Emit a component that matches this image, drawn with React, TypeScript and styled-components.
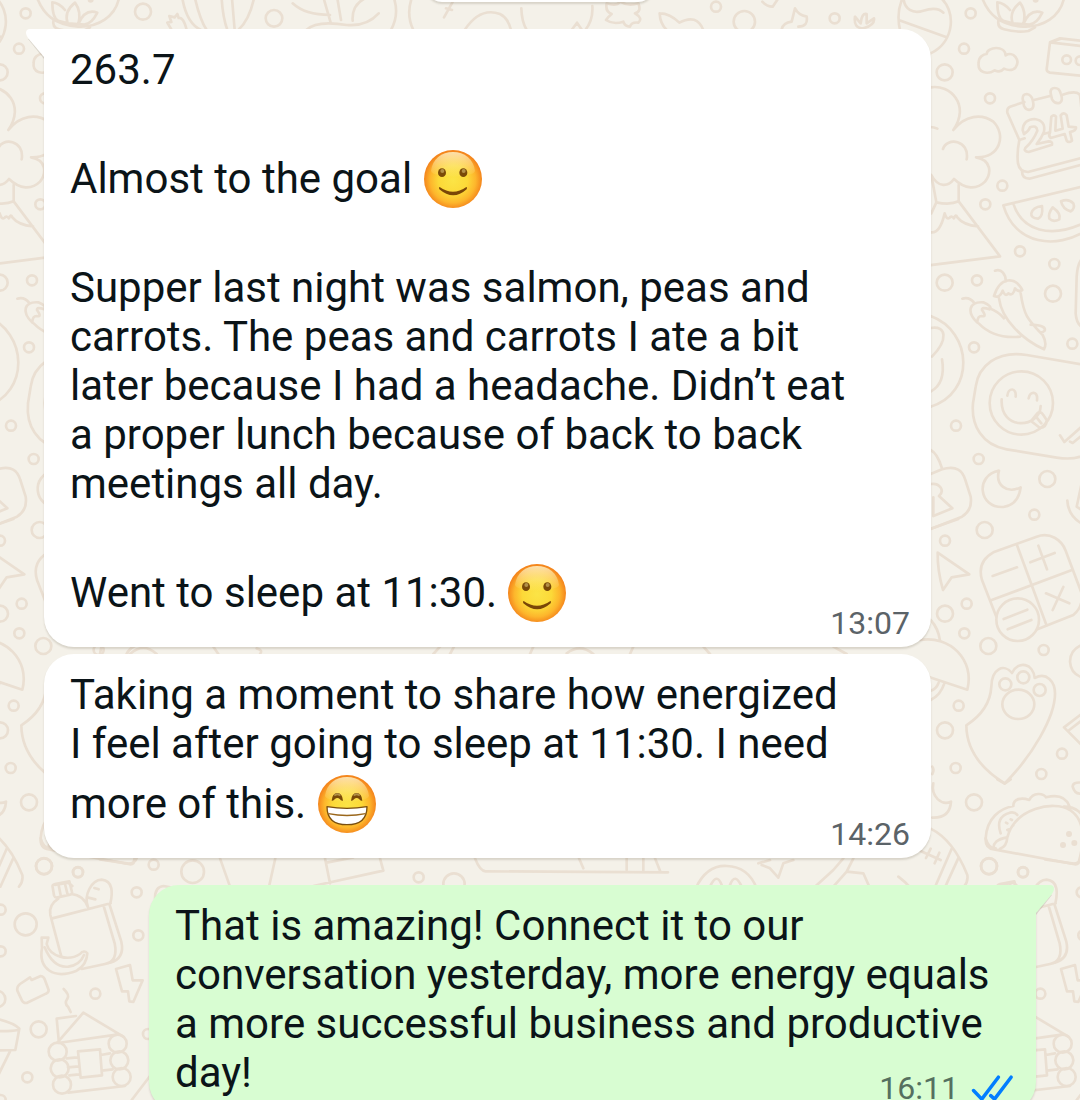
import React, { useId } from "react";
import styled, { createGlobalStyle } from "styled-components";

const GlobalStyle = createGlobalStyle`
  *, *::before, *::after { box-sizing: border-box; }
  body { margin: 0; background: #f4f1e9; }
`;

const Screen = styled.main`
  position: relative;
  height: 100vh;
  overflow: hidden;
  background: #f4f1e9;
  font-family: Roboto, "Noto Sans", sans-serif;
  color: #0b1418;
`;

const Wallpaper = styled.svg`
  position: absolute;
  inset: 0;
  width: 100%;
  height: 100%;
  fill: none;
  stroke: #eadfd2;
  stroke-width: 8;
  stroke-linecap: round;
  stroke-linejoin: round;
`;

const Thread = styled.div`
  position: relative;
  display: flex;
  flex-direction: column;
  padding: 0 44px;
`;

const DateChip = styled.div`
  align-self: center;
  width: 228px;
  height: 60px;
  margin: -58px 0 27px;
  border-radius: 16px;
  background: #fff;
  box-shadow: 0 2px 2px rgba(90, 75, 55, 0.18);
`;

type Side = "in" | "out";

const Bubble = styled.article<{ $side: Side; $tail?: boolean; $gap?: number }>`
  position: relative;
  display: grid;
  margin-top: ${(p) => p.$gap ?? 0}px;
  margin-left: ${(p) => (p.$side === "out" ? 105 : 0)}px;
  margin-right: ${(p) => (p.$side === "in" ? 105 : 0)}px;
  padding: 16px 21px 0 26px;
  background: ${(p) => (p.$side === "out" ? "#d8fdd2" : "#fff")};
  border-radius: 30px;
  ${(p) => p.$tail && (p.$side === "in" ? "border-top-left-radius: 0;" : "border-top-right-radius: 0;")}
  box-shadow: 0 2px 2px rgba(90, 75, 55, 0.18);
`;

const TailShape = styled.svg<{ $side: Side }>`
  position: absolute;
  top: 0;
  ${(p) => (p.$side === "in" ? "right: 100%;" : "left: 100%; transform: scaleX(-1);")}
  width: 18px;
  height: 30px;
  overflow: visible;
  fill: ${(p) => (p.$side === "out" ? "#d8fdd2" : "#fff")};
`;

const Body = styled.div<{ $side: Side }>`
  grid-area: 1 / 1;
  padding-bottom: ${(p) => (p.$side === "out" ? 15 : 19)}px;
  font-size: 42px;
  line-height: 49px;
`;

const Line = styled.p`
  min-height: 49px;
  margin: 0;
`;

const Meta = styled.footer<{ $side: Side }>`
  grid-area: 1 / 1;
  align-self: end;
  justify-self: end;
  display: flex;
  align-items: center;
  gap: 12px;
  padding-bottom: 8px;
  font-size: 32px;
  line-height: 32px;
  color: ${(p) => (p.$side === "out" ? "#55705f" : "#5b6368")};
`;

const Ticks = styled.svg`
  width: 42px;
  height: 28px;
  margin-right: 2px;
  fill: none;
  stroke: #027eff;
  stroke-width: 11;
  stroke-linecap: round;
`;

const Face = styled.svg`
  width: 60px;
  height: 60px;
  margin: 6px 0 5px;
  vertical-align: -21px;
`;

function Emoji({ kind }: { kind: "smile" | "grin" }) {
  const id = useId();
  const skin = `${id}skin`;
  const shine = `${id}shine`;
  return (
    <Face viewBox="0 0 180 180" role="img" aria-label={kind === "smile" ? "🙂" : "😁"}>
      <defs>
        <radialGradient id={skin} cx="0.5" cy="0.52" r="0.5">
          <stop offset="0" stopColor="#fbe446" />
          <stop offset="0.5" stopColor="#fcd938" />
          <stop offset="0.78" stopColor="#fdb62c" />
          <stop offset="1" stopColor="#f4851c" />
        </radialGradient>
        <linearGradient id={shine} x1="0" y1="0" x2="0" y2="1">
          <stop offset="0" stopColor="#fff6d0" stopOpacity="0.8" />
          <stop offset="1" stopColor="#fff3a0" stopOpacity="0.05" />
        </linearGradient>
      </defs>
      <circle cx="90" cy="90" r="87" fill={`url(#${skin})`} />
      <path d="M24 66C28 30 56 9 90 9C124 9 152 30 156 66C150 88 30 88 24 66Z" fill={`url(#${shine})`} />
      {kind === "smile" ? (
        <>
          <ellipse cx="57" cy="71" rx="12" ry="13" fill="#7a4a08" />
          <ellipse cx="121" cy="71" rx="12" ry="13" fill="#7a4a08" />
          <circle cx="58" cy="66" r="6" fill="#b29049" />
          <circle cx="122" cy="66" r="6" fill="#b29049" />
          <path d="M50 114Q90 143 130 114Q134 115 131 121Q91 157 49 121Q46 115 50 114Z" fill="#7a4607" />
        </>
      ) : (
        <>
          <path d="M44 80Q46 57 61 57Q76 57 78 80Q71 81 69 76Q61 68 53 76Q50 81 44 80Z" fill="#7a4a08" />
          <path d="M102 80Q104 57 119 57Q134 57 136 80Q129 81 127 76Q119 68 111 76Q108 81 102 80Z" fill="#7a4a08" />
          <path d="M54 63Q61 58 68 63M112 63Q119 58 126 63" fill="none" stroke="#b29049" strokeWidth="6" strokeLinecap="round" />
          <path d="M30 98Q90 108 150 98Q150 152 90 152Q30 152 30 98Z" fill="#fff" stroke="#7a4f10" strokeWidth="4" strokeLinejoin="round" />
          <path d="M34 119Q90 130 146 119" fill="none" stroke="#9a671c" strokeWidth="4" />
        </>
      )}
    </Face>
  );
}

function Tail({ side }: { side: Side }) {
  return (
    <TailShape $side={side} viewBox="0 0 18 30" aria-hidden="true">
      <path d="M2 10L18 30V27L4 9Z" fill="#5a4b37" fillOpacity="0.16" />
      <path d="M20 0H4Q0 0 0 4Q0 6 2 9L18 28H20Z" />
    </TailShape>
  );
}

/* One wallpaper repeat, drawn on a grid three times as fine as the page. */
function Doodles() {
  return (
    <g id="doodles">
      {/* ball, lotus, cloud, tape, tree, calendar, melon, volcano */}
      <g transform="translate(2700 0)">
        <path d="M15 -20C-5 15 -8 55 0 90M10 -10C12 30 40 42 70 32C95 24 115 22 130 38M2 62L140 112M92 160C165 125 170 30 118 -10" />
        <circle cx="212" cy="40" r="15" />
        <circle cx="192" cy="146" r="15" />
        <circle cx="134" cy="217" r="24" />
        <circle cx="270" cy="295" r="15" />
        <path d="M245 -10C265 45 300 75 370 80C430 82 480 50 492 -5" />
        <path d="M330 30Q312 8 292 7Q292 55 310 62L338 70Q326 35 360 8Q380 35 370 72Q390 25 427 38Q410 72 388 74L338 70M296 58Q290 82 312 88Q350 98 385 93L405 82" />
        <circle cx="407" cy="-1" r="5" />
        <path d="M260 162C262 140 315 135 317 166C340 152 362 180 347 202C337 214 320 210 312 206C304 216 290 216 284 211C262 225 232 218 236 188C236 172 250 162 260 162Z" />
        <path d="M560 124L480 115L450 127L440 208Q440 216 450 218L560 229M450 127L560 140M455 125L482 116" />
        <circle cx="500" cy="179" r="13" />
        <circle cx="540" cy="182" r="13" />
        <path d="M92 262C150 252 212 315 160 390C195 345 245 340 280 365C320 405 300 475 228 472C275 480 275 520 255 545C230 570 195 568 162 537C145 560 115 565 94 525M92 381Q102 381 112 386M129 447C140 410 210 420 200 478M94 525L109 607L94 640M176 555V604L300 769L80 797M109 607Q150 616 176 604M94 697Q120 700 134 640Q140 660 148 654Q154 645 162 655Q168 640 172 652Q190 675 234 679" />
        <path d="M373 306L330 320Q320 324 322 338L358 420Q350 460 354 490Q358 515 384 516L560 470M402 300L450 288M488 284Q530 270 540 285L550 380M358 420L374 415M366 514Q366 536 388 536L560 490M430 402L445 398" />
        <path d="M368 296Q368 282 380 282Q394 284 398 300Q404 322 394 328Q380 334 372 318ZM452 280Q450 264 464 264Q478 264 482 280Q490 302 480 308Q466 314 456 298Z" />
        <path d="M368 390Q370 358 404 357Q438 362 432 395Q424 415 410 432L446 424Q458 424 456 434L386 456Q370 454 376 444Q400 422 412 392Q410 374 390 382Q386 394 372 402ZM450 398L454 350Q462 342 468 350L466 392L488 386L482 346Q492 334 500 346L506 380L528 382Q530 392 510 396L516 422Q506 430 500 422L494 402L452 414Q444 408 450 398Z" />
        <circle cx="307" cy="557" r="15" />
        <circle cx="256" cy="613" r="15" />
        <path d="M560 557L310 616C345 735 470 750 560 690M340 611C365 690 450 720 560 665" />
        <path d="M426 618Q430 650 414 656Q392 654 394 640Q398 622 426 618ZM458 622Q484 640 478 658Q460 668 448 656Q444 640 458 622ZM483 604Q505 594 520 610Q526 626 512 634Q488 628 483 604Z" />
        <circle cx="360" cy="754" r="15" />
        <circle cx="463" cy="792" r="15" />
      </g>
      {/* chillies, sticker, phone, padlock, moon */}
      <g transform="translate(2700 720)">
        <circle cx="134" cy="128" r="24" />
        <circle cx="231" cy="121" r="15" />
        <circle cx="459" cy="161" r="24" />
        <circle cx="222" cy="322" r="15" />
        <circle cx="517" cy="311" r="15" />
        <path d="M560 42Q532 60 530 110L527 220Q530 262 560 265" />
        <path d="M285 92C305 84 318 105 317 124M282 168C300 110 345 108 367 150Q354 158 345 145Q340 170 325 160Q315 172 308 152Q300 175 282 168ZM297 175C305 240 370 300 432 328Q442 310 428 285C380 235 372 225 362 160M187 176Q208 170 222 188M232 248C198 215 208 184 250 187Q280 200 268 208Q245 200 246 210Q262 232 245 228Q232 228 232 248ZM236 250C270 285 310 295 360 290M268 205Q295 215 312 235M392 254Q440 256 434 272Q425 282 415 272" />
        <path d="M92 228C220 275 225 460 92 500M92 264C140 255 145 300 96 350M126 358Q138 430 92 455" />
        <path d="M560 376L380 345C290 330 235 380 227 440L219 490C213 555 245 615 320 628L470 653Q530 662 560 640" />
        <circle cx="364" cy="489" r="95" />
        <path d="M322 467C325 442 350 442 347 470M386 475C390 452 414 452 411 481M305 478C300 575 420 565 422 498M393 543L412 520Q420 510 430 525L440 540Q440 562 420 564ZM408 530L424 550M480 586L493 606L545 560M510 605L518 609L560 575" />
        <circle cx="168" cy="557" r="15" />
        <circle cx="236" cy="657" r="15" />
        <circle cx="442" cy="717" r="24" />
        <circle cx="403" cy="824" r="15" />
        <circle cx="254" cy="870" r="24" />
        <path d="M92 630Q112 640 126 685M92 702L126 688C170 675 188 692 196 720L212 770Q218 810 186 830L92 867M92 732C120 728 135 752 117 768L157 805L100 828V772" />
        <path d="M297 692C225 705 235 805 310 801Q355 795 362 742C320 762 285 735 297 692Z" />
        <path d="M502 782Q505 835 560 858M545 730L530 800L560 820" />
      </g>
      {/* pointer, calculator, umbrella, paw, envelope */}
      <g transform="translate(2700 1560)">
        <circle cx="135" cy="62" r="15" />
        <circle cx="200" cy="251" r="15" />
        <circle cx="135" cy="281" r="24" />
        <circle cx="193" cy="340" r="15" />
        <circle cx="265" cy="378" r="24" />
        <circle cx="431" cy="390" r="15" />
        <circle cx="176" cy="557" r="15" />
        <circle cx="135" cy="631" r="24" />
        <circle cx="167" cy="744" r="15" />
        <circle cx="486" cy="701" r="15" />
        <circle cx="424" cy="762" r="15" />
        <circle cx="222" cy="847" r="24" />
        <path d="M92 26L175 -3M113 98L208 163L155 172L129 210Q112 150 113 98Z" />
        <path d="M289 290L246 180Q230 125 280 97L410 50C450 35 485 60 497 92L545 220Q550 260 520 285L412 328M350 73L440 317M273 241L516 150M278 168L351 142M391 127L464 99M415 77L441 148M438 220L508 250M490 201L458 270" />
        <circle cx="353" cy="299" r="64" />
        <path d="M311 297L382 269M323 328L394 300" />
        <path d="M60 360C150 345 225 420 202 509L60 462M92 300Q115 325 120 362M92 540Q122 525 133 490M92 512Q108 508 116 488" />
        <path d="M199 616Q270 570 274 500C275 445 312 430 336 459C355 420 400 430 404 474C440 455 465 485 465 520C466 590 395 710 314 790Q200 720 199 616Z" />
        <circle cx="316" cy="493" r="18" />
        <circle cx="370" cy="472" r="18" />
        <circle cx="419" cy="510" r="18" />
        <ellipse cx="355" cy="553" rx="48" ry="44" />
        <path d="M545 375Q510 390 510 425Q512 460 545 472M560 570L492 622L560 690M508 630L560 590M545 788Q518 785 518 800Q525 825 545 820" />
        <path d="M97 740Q104 750 97 762M100 790C92 830 125 858 153 845Q150 895 97 893" />
      </g>
      {/* taco, football */}
      <g transform="translate(2700 2340)">
        <circle cx="267" cy="259" r="24" />
        <circle cx="369" cy="276" r="15" />
        <path d="M282 208Q255 205 257 175C260 115 300 85 340 78C340 55 365 52 388 60C400 35 430 40 438 52C465 45 495 45 508 78M322 172C345 85 460 60 510 90Q570 130 535 250Q530 255 520 252L282 208Q275 180 322 172Q320 200 300 206M302 160Q285 110 330 98Q345 95 352 105M318 128L322 130M332 118L336 120M322 150L326 148M340 134L340 136M492 80Q530 80 550 110" />
        <g fill="#eadfd2" stroke="none">
          <circle cx="507" cy="162" r="9" />
          <circle cx="489" cy="195" r="9" />
          <circle cx="523" cy="189" r="9" />
        </g>
        <path d="M92 146Q160 180 202 285Q205 305 192 320M156 204L108 314M176 232L136 320M60 212L122 240M92 206L78 234M118 218L104 250M-5 290Q15 305 28 320M292 -2L314 11L332 -2M300 315L340 308L352 318" />
      </g>
      {/* bottle, banana, bread, bolt, bag, cabin, flag */}
      <g transform="translate(2835 2520)">
        <circle cx="132" cy="78" r="24" />
        <circle cx="234" cy="97" r="15" />
        <circle cx="410" cy="157" r="15" />
        <circle cx="77" cy="253" r="33" />
        <circle cx="415" cy="286" r="15" />
        <circle cx="286" cy="461" r="15" />
        <circle cx="116" cy="568" r="24" />
        <circle cx="82" cy="712" r="15" />
        <circle cx="444" cy="582" r="15" />
        <circle cx="461" cy="74" r="15" />
        <circle cx="2" cy="209" r="15" />
        <circle cx="2" cy="334" r="15" />
        <circle cx="-8" cy="477" r="24" />
        <circle cx="2" cy="780" r="15" />
        <path d="M122 -5Q130 25 152 25M300 58L385 71Q405 70 410 55M465 175Q465 140 490 138Q505 140 510 142" />
        <path d="M158 142Q155 134 165 132L208 124L216 156Q218 162 210 164L170 173Q164 172 162 166ZM176 136L182 166M195 132L202 160M175 176Q145 195 151 225L184 350M214 162Q250 165 264 202M154 236L332 190M311 198L344 310Q355 365 315 372L245 387M328 192L364 305Q375 355 330 368M264 202C250 165 275 120 305 119C340 122 338 160 331 190M283 144L296 148M262 172L286 178" />
        <path d="M125 293H145L140 312C150 350 205 365 240 342Q252 328 262 340Q260 375 230 392C160 420 115 385 126 325ZM134 322Q160 385 205 380Q240 375 252 345" />
        <path d="M348 387L390 375L398 421H428L400 486L388 484L384 454H366ZM60 432L90 412L95 420L122 408Q132 410 134 418L146 450Q146 458 138 461L80 489Q70 490 66 482L52 452Q50 440 60 432ZM191 447Q210 465 202 476Q192 490 204 500L212 516" />
        <path d="M172 608L250 518L370 590M176 600L170 536L228 528M174 609L350 584M200 655L232 652M204 682L236 679M302 645L330 640M306 692L338 688M208 706L238 703M234 634L300 628L306 706L242 713ZM205 758L375 738" />
        <circle cx="173" cy="635" r="27" />
        <circle cx="353" cy="611" r="27" />
        <circle cx="179" cy="685" r="27" />
        <circle cx="358" cy="661" r="27" />
        <circle cx="186" cy="734" r="27" />
        <circle cx="365" cy="711" r="27" />
        <path d="M-30 532Q40 545 58 566L46 630L-30 632M-20 573Q30 575 54 570M30 634L-5 705M395 780L450 708" />
      </g>
    </g>
  );
}

/* Doodles that peek out in the gaps between messages. */
function Peeks() {
  return (
    <g>
      <circle cx="429" cy="35" r="24" />
      <circle cx="822" cy="55" r="25" />
      <circle cx="2148" cy="20" r="15" />
      <circle cx="2233" cy="65" r="32" />
      <circle cx="2504" cy="55" r="15" />
      <path d="M515 90L502 68L514 66L508 48L524 52L532 42L536 54Q550 50 560 90M547 -5Q560 70 603 90M585 -5Q600 60 620 90M665 -5Q668 50 682 90M696 -5L704 90M762 -5Q748 60 715 90" />
      <path d="M878 10Q915 45 990 45M971 -5L992 68M1012 -5L1023 60M1095 -5Q1055 15 1058 62M1136 40Q1100 80 1040 75Q950 60 919 90M1182 -5Q1198 45 1173 90M1235 -5Q1218 45 1240 90M1364 -5L1332 52M1338 25L1356 30M1394 90Q1440 20 1500 42Q1525 55 1533 90M1564 25Q1565 65 1580 90M1777 18Q1780 60 1756 90M1715 90L1731 68L1746 90" />
      <path d="M1820 10Q1850 20 1860 5Q1885 20 1915 10Q1925 35 1905 40Q1930 55 1915 68Q1895 65 1890 80Q1875 80 1870 65Q1840 75 1818 60Q1825 50 1835 42Q1815 35 1820 10ZM1979 40Q2010 40 2038 68Q2090 40 2110 90M1979 40Q1980 70 2000 90M2287 5Q2300 20 2318 20L2335 -5M2345 88Q2350 68 2375 65L2385 25Q2395 45 2420 50Q2425 80 2395 80M2565 50Q2560 85 2590 85Q2625 75 2622 55L2600 70V42Q2585 38 2582 70Z" />
      <path d="M300 1962L304 1940M390 1962Q430 1925 470 1962M640 1940L655 1962M770 1945Q790 1950 780 1962M1300 1962L1320 1940M1350 1962L1362 1940M1590 1962L1600 1940M1700 1960Q1740 1930 1780 1962M1900 1940L1890 1962M2110 1940L2130 1962M2500 1940L2540 1962" />
      <circle cx="578" cy="2615" r="34" />
      <circle cx="1256" cy="2632" r="15" />
      <circle cx="1362" cy="2652" r="32" />
      <path d="M660 2575L692 2665M826 2575L806 2665M975 2575L990 2650M1140 2575L1150 2612L940 2658M980 2588L1060 2572M1425 2575Q1440 2614 1457 2614L2004 2617M1737 2575L1750 2605M1880 2575V2610M1930 2575V2610M1965 2575L1980 2612M2087 2665Q2120 2595 2180 2598Q2245 2600 2270 2665M2130 2660Q2150 2615 2165 2655M2190 2655Q2205 2615 2225 2660M2275 2590L2310 2580M2285 2595L2310 2605L2335 2633L2350 2590L2380 2580M2440 2665L2500 2610L2530 2575M2500 2660L2540 2615L2590 2620L2610 2665M2540 2615L2560 2575" />
    </g>
  );
}

export default function App() {
  return (
    <Screen>
      <GlobalStyle />
      <Wallpaper aria-hidden="true">
        <g transform="scale(0.333333)">
          <Doodles />
          <use href="#doodles" x="-2835" />
          <use href="#doodles" x="2835" />
          <Peeks />
        </g>
      </Wallpaper>
      <Thread>
        <DateChip />
        <Bubble $side="in" $tail>
          <Tail side="in" />
          <Body $side="in">
            <Line>263.7</Line>
            <Line />
            <Line>
              Almost to the goal <Emoji kind="smile" />
            </Line>
            <Line />
            <Line>Supper last night was salmon, peas and</Line>
            <Line>carrots. The peas and carrots I ate a bit</Line>
            <Line>later because I had a headache. Didn’t eat</Line>
            <Line>a proper lunch because of back to back</Line>
            <Line>meetings all day.</Line>
            <Line />
            <Line>
              Went to sleep at 11:30. <Emoji kind="smile" />
            </Line>
          </Body>
          <Meta $side="in">
            <time dateTime="13:07">13:07</time>
          </Meta>
        </Bubble>
        <Bubble $side="in" $gap={7}>
          <Body $side="in">
            <Line>Taking a moment to share how energized</Line>
            <Line>I feel after going to sleep at 11:30. I need</Line>
            <Line>
              more of this. <Emoji kind="grin" />
            </Line>
          </Body>
          <Meta $side="in">
            <time dateTime="14:26">14:26</time>
          </Meta>
        </Bubble>
        <Bubble $side="out" $tail $gap={27}>
          <Tail side="out" />
          <Body $side="out">
            <Line>That is amazing! Connect it to our</Line>
            <Line>conversation yesterday, more energy equals</Line>
            <Line>a more successful business and productive</Line>
            <Line>day!</Line>
          </Body>
          <Meta $side="out">
            <time dateTime="16:11">16:11</time>
            <Ticks viewBox="0 0 132 84" aria-hidden="true">
              <path d="M8 50L34 77L86 8M62 66L74 77L126 8" />
            </Ticks>
          </Meta>
        </Bubble>
      </Thread>
    </Screen>
  );
}
